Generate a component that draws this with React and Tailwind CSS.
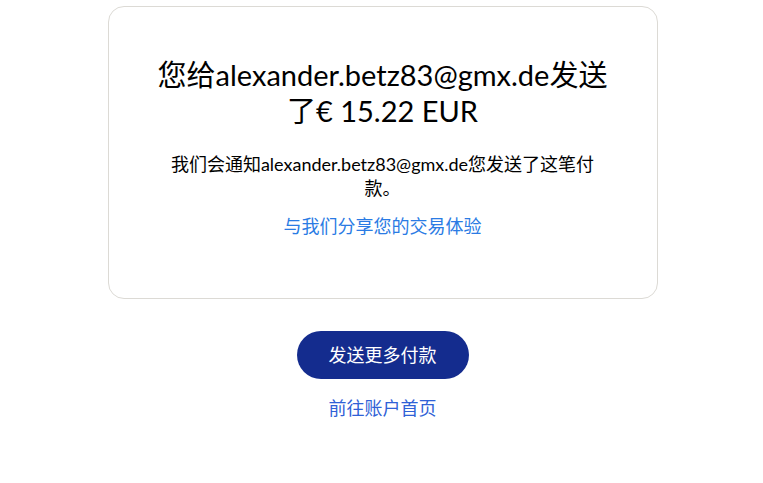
export default function App() {
  const font = { fontFamily: 'Lato, "Noto Sans CJK SC", sans-serif' };
  return (
    <div className="min-h-[483px] w-full bg-white flex flex-col items-center pt-[6px] pl-[2px] text-[#000]" style={font}>
      <div className="w-[550px] rounded-[16px] border border-[#dcdad5] px-[48px] pt-[50px] pb-[60px] flex flex-col items-center text-center">
        <h1 className="text-[29px] leading-[36px] font-normal text-[#000] max-w-[452px]">
          您给alexander.betz83@gmx.de发送了€ 15.22 EUR
        </h1>
        <p className="mt-[23px] text-[18px] leading-[24px] text-[#000] max-w-[440px]">
          我们会通知alexander.betz83@gmx.de您发送了这笔付款。
        </p>
        <a className="mt-[14px] text-[18px] leading-[24px] text-[#2a7be4]">与我们分享您的交易体验</a>
      </div>
      <button className="mt-[32px] h-[48px] w-[172px] rounded-full bg-[#142c8e] text-white text-[18px]">
        发送更多付款
      </button>
      <a className="mt-[17px] text-[18px] leading-[24px] text-[#2f61d6]">前往账户首页</a>
    </div>
  );
}
